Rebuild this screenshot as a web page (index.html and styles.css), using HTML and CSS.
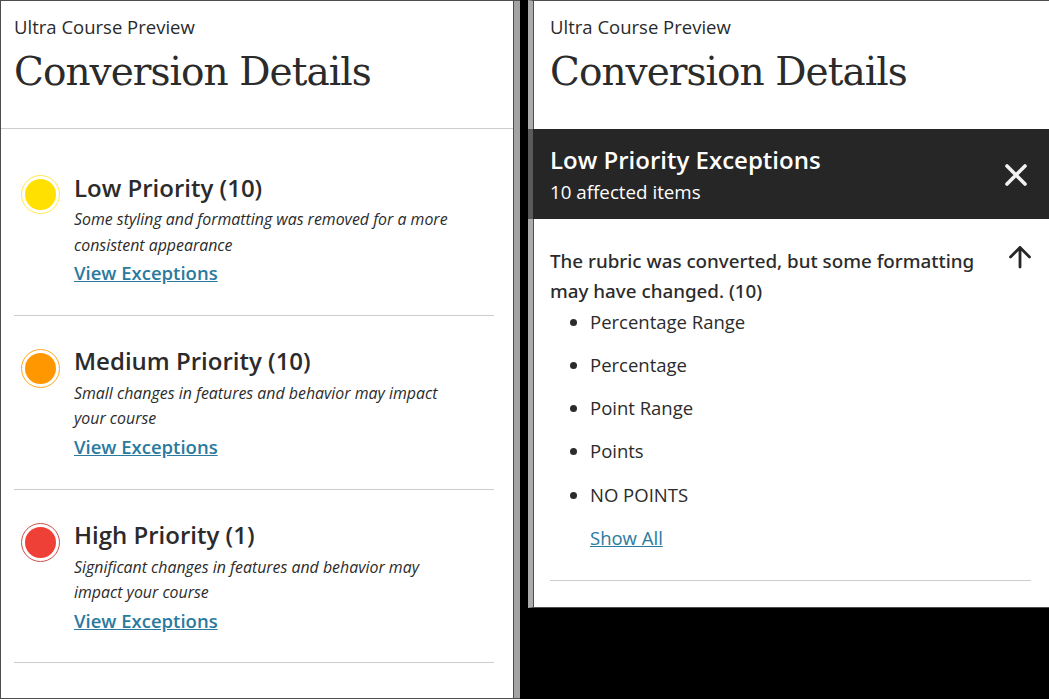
FILE: index.html
```html
<!DOCTYPE html>
<html lang="en">
<head>
  <meta charset="UTF-8">
  <meta name="viewport" content="width=device-width, initial-scale=1.0">
  <title>Conversion Details</title>
  <link rel="stylesheet" href="styles.css">
</head>
<body>
  <div class="page">
    <section class="panel panel--left">
      <header class="panel__head">
        <p class="panel__eyebrow">Ultra Course Preview</p>
        <h1 class="panel__title">Conversion Details</h1>
      </header>
      <ul class="priorities">
        <li class="priority">
          <span class="dot dot--low"></span>
          <div class="priority__body">
            <h2 class="priority__title">Low Priority (10)</h2>
            <p class="priority__text">Some styling and formatting was removed for a more consistent appearance</p>
            <a class="priority__link" href="#">View Exceptions</a>
          </div>
        </li>
        <li class="priority">
          <span class="dot dot--medium"></span>
          <div class="priority__body">
            <h2 class="priority__title">Medium Priority (10)</h2>
            <p class="priority__text">Small changes in features and behavior may impact your course</p>
            <a class="priority__link" href="#">View Exceptions</a>
          </div>
        </li>
        <li class="priority">
          <span class="dot dot--high"></span>
          <div class="priority__body">
            <h2 class="priority__title">High Priority (1)</h2>
            <p class="priority__text">Significant changes in features and behavior may impact your course</p>
            <a class="priority__link" href="#">View Exceptions</a>
          </div>
        </li>
      </ul>
    </section>

    <section class="panel panel--right">
      <header class="panel__head panel__head--short">
        <p class="panel__eyebrow">Ultra Course Preview</p>
        <h1 class="panel__title">Conversion Details</h1>
      </header>
      <div class="banner">
        <div>
          <h2 class="banner__title">Low Priority Exceptions</h2>
          <p class="banner__sub">10 affected items</p>
        </div>
        <svg class="banner__close" viewBox="0 0 24 24" width="24" height="24" aria-hidden="true">
          <path d="M3 3l18 18M21 3L3 21" fill="none" stroke="#f2f2f2" stroke-width="3.6" stroke-linecap="round"/>
        </svg>
      </div>
      <div class="exceptions">
        <div class="exceptions__top">
          <h3 class="exceptions__title">The rubric was converted, but some formatting may have changed. (10)</h3>
          <svg class="exceptions__arrow" viewBox="0 0 24 24" width="24" height="24" aria-hidden="true">
            <path d="M12 22V2.500M2.500 12L12 2.500l9.500 9.500" fill="none" stroke="#262626" stroke-width="2.800" stroke-linecap="round" stroke-linejoin="round"/>
          </svg>
        </div>
        <ul class="exceptions__list">
          <li>Percentage Range</li>
          <li>Percentage</li>
          <li>Point Range</li>
          <li>Points</li>
          <li>NO POINTS</li>
        </ul>
        <a class="exceptions__more" href="#">Show All</a>
      </div>
    </section>
  </div>
</body>
</html>
```

FILE: styles.css
```css
* {
  box-sizing: border-box;
}

html,
body {
  margin: 0;
  height: 100%;
  background-color: #000000;
}

body {
  font-family: "Open Sans", "Noto Sans", sans-serif;
  color: #2B2B2B;
}

.page {
  display: flex;
  align-items: flex-start;
  width: 1049px;
  height: 699px;
  overflow: hidden;
}

.panel {
  background-color: #FFFFFF;
}

.panel--left {
  flex: none;
  width: 520px;
  height: 699px;
  border: 1px solid #4D4D4D;
  border-right: 0;
  box-shadow: inset -6px 0 0 #A3A3A3, inset -7px 0 0 #4D4D4D;
}

.panel--right {
  flex: none;
  width: 521px;
  height: 608px;
  margin-left: 8px;
  border-left: 5px solid #ABABAB;
  border-bottom: 1px solid #4D4D4D;
  border-top: 1px solid #4D4D4D;
  position: relative;
}

.panel--right::before {
  content: "";
  display: block;
  position: absolute;
  left: 0;
  top: 0;
  bottom: 0;
  width: 1px;
  background-color: #4D4D4D;
}

.panel__head {
  width: 512px;
  height: 128px;
  padding: 13px 0 0 13px;
  border-bottom: 1px solid #CDCDCD;
}

.panel__head--short {
  width: auto;
  padding-left: 17px;
  border-bottom: 0;
}

.panel__eyebrow {
  margin: 0;
  font-size: 18.500px;
  line-height: 26px;
}

.panel__title {
  margin: 6px 0 0;
  font-family: "DejaVu Serif", "Liberation Serif", serif;
  font-weight: 400;
  font-size: 39px;
  letter-spacing: -0.950px;
  line-height: 52px;
}

.priorities {
  list-style: none;
  width: 480px;
  margin: 0 0 0 13px;
  padding: 0;
}

.priority {
  display: flex;
  height: 174px;
  padding: 30px 0 0 7px;
  border-bottom: 1px solid #CDCDCD;
}

.priority:first-child {
  height: 187px;
  padding-top: 44px;
}

.priority:last-child {
  height: 173px;
}

.dot {
  flex: none;
  width: 39px;
  height: 39px;
  margin-top: 3px;
  border-radius: 50%;
  border: 1px solid;
  background-clip: content-box;
  padding: 3px;
}

.priority:first-child .dot {
  margin-top: 2px;
}

.dot--low {
  border-color: #FFE94D;
  background-color: #FFE000;
}

.dot--medium {
  border-color: #FFA81F;
  background-color: #FF9800;
}

.dot--high {
  border-color: #C9504A;
  background-color: #EE4036;
}

.priority__body {
  margin-left: 14px;
  width: 380px;
}

.priority__title {
  margin: 0;
  font-size: 24px;
  font-weight: 600;
  line-height: 30px;
}

.priority__text {
  margin: 5px 0 1px;
  font-size: 15.900px;
  font-style: italic;
  line-height: 25px;
}

.priority:first-child .priority__text {
  margin: 4px 0 0;
  line-height: 25.500px;
}

.priority__link {
  display: inline-block;
  font-size: 18.500px;
  font-weight: 600;
  line-height: 30px;
  color: #2A7A9E;
}

.banner {
  position: relative;
  z-index: 1;
  display: flex;
  align-items: center;
  justify-content: space-between;
  height: 90px;
  margin-left: -5px;
  padding: 2px 21px 0 17px;
  border-left: 5px solid #5A5A5A;
  background-clip: padding-box;
  background-color: #262626;
  color: #FFFFFF;
}

.banner__title {
  margin: 0;
  font-size: 24px;
  font-weight: 600;
  line-height: 32px;
}

.banner__sub {
  margin: 1px 0 0;
  font-size: 18.750px;
  line-height: 30px;
}

.exceptions {
  margin: 0 18px 0 17px;
  padding: 27px 0 27px;
  border-bottom: 1px solid #CDCDCD;
}

.exceptions__top {
  display: flex;
  justify-content: space-between;
  align-items: flex-start;
}

.exceptions__title {
  width: 440px;
  margin: 0;
  font-family: "Noto Sans", "Open Sans", sans-serif;
  font-size: 18.800px;
  font-weight: 500;
  line-height: 30px;
}

.exceptions__arrow {
  flex: none;
  margin-top: -1px;
  margin-right: -1px;
}

.exceptions__list {
  margin: 1px 0 0;
  padding: 0 0 0 40px;
  font-size: 18.500px;
  line-height: 30px;
}

.exceptions__list li {
  margin-bottom: 13.150px;
}

.exceptions__more {
  display: inline-block;
  margin-left: 40px;
  font-size: 18.500px;
  line-height: 30px;
  color: #2A7A9E;
}
```
